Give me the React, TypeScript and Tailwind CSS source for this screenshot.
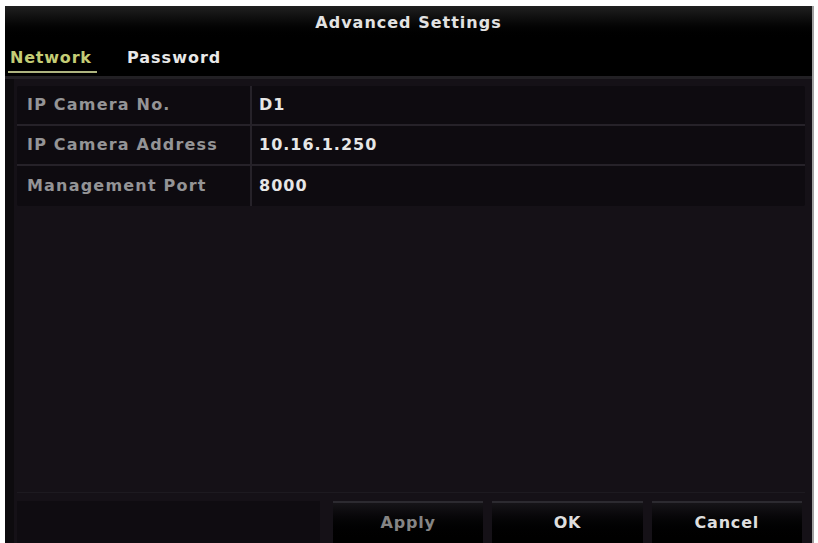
const font = { fontFamily: '"DejaVu Sans", Verdana, sans-serif' };

const rows = [
  { label: 'IP Camera No.', value: 'D1' },
  { label: 'IP Camera Address', value: '10.16.1.250' },
  { label: 'Management Port', value: '8000' },
];

function Button({ label, disabled }: { label: string; disabled?: boolean }) {
  return (
    <div className="flex h-full flex-1 items-center justify-center border-t-2 border-[#2c2a30] bg-gradient-to-b from-[#161418] to-black">
      <span className={`text-[16px] font-bold tracking-[0.8px] ${disabled ? 'text-[#858585]' : 'text-[#dedede]'}`}>
        {label}
      </span>
    </div>
  );
}

export default function App() {
  return (
    <div className="h-[543px] w-[818px] overflow-hidden bg-white pl-[5px] pt-[6px]" style={font}>
      <div className="flex h-[537px] w-[809px] flex-col border-r-2 border-[#a0a0a0] bg-black">
        <div className="flex h-[34px] items-center justify-center bg-gradient-to-b from-[#202020] via-[#080808] to-black">
          <span className="text-[16px] font-bold tracking-[1px] text-[#e2e2e2]">Advanced Settings</span>
        </div>

        <div className="flex h-[36px] items-end gap-[30px] bg-black pl-[3px]">
          <div className="flex flex-col pb-[3px]">
            <span className="px-[2px] text-[16px] font-bold tracking-[0.8px] text-[#c4cd76]">Network</span>
            <div className="mt-[1px] h-[2px] w-[89px] bg-[#aeb47f]" />
          </div>
          <span className="pb-[6px] text-[16px] font-bold tracking-[1px] text-[#e8e8e8]">Password</span>
        </div>

        <div className="h-[3px] bg-[#222024]" />

        <div className="flex flex-1 flex-col border-l-[9px] border-[#0d0b0e] bg-[#151117] pl-[3px] pr-[7px] pt-[7px]">
          <div className="flex flex-col rounded-[2px] bg-[#0e0b10]">
            {rows.map((r, i) => (
              <div
                key={r.label}
                className={`flex h-[40px] ${i < rows.length - 1 ? 'border-b-2 border-[#262229]' : ''}`}
              >
                <div className="flex w-[235px] items-center border-r-2 border-[#262229] pl-[10px]">
                  <span className="text-[16px] font-bold tracking-[1.2px] text-[#949496]">{r.label}</span>
                </div>
                <div className="flex flex-1 items-center pl-[7px]">
                  <span className="text-[16px] font-bold tracking-[1px] text-[#e6e6e6]">{r.value}</span>
                </div>
              </div>
            ))}
          </div>

          <div className="flex-1" />

          <div className="h-px bg-[#1d1a20]" />
          <div className="mt-[8px] flex h-[42px] items-stretch">
            <div className="w-[303px] bg-[#0f0c11]" />
            <div className="ml-[13px] flex flex-1 gap-[9px] pr-[3px]">
              <Button label="Apply" disabled />
              <Button label="OK" />
              <Button label="Cancel" />
            </div>
          </div>
        </div>
      </div>
    </div>
  );
}
